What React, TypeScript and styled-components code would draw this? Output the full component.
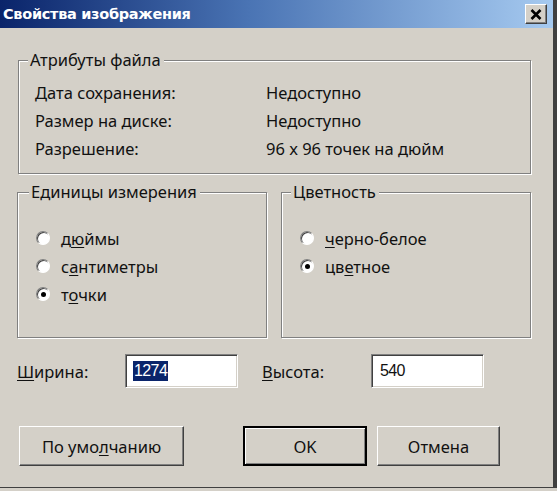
import React from 'react';
import styled, { createGlobalStyle } from 'styled-components';

const GlobalStyle = createGlobalStyle`
  html, body {
    margin: 0;
    padding: 0;
    background: #d4d0c8;
  }
  * {
    box-sizing: border-box;
  }
`;

const uiFont = `"Noto Sans", "Open Sans", "DejaVu Sans", sans-serif`;

const Window = styled.div`
  width: 557px;
  height: 488px;
  background: #d4d0c8;
  font-family: ${uiFont};
  font-size: 16.5px;
  color: #111;
  display: flex;
  flex-direction: column;
  border-right: 4px solid #404040;
  border-bottom: 1px solid #404040;
  overflow: hidden;
`;

const TitleBar = styled.div`
  height: 28px;
  flex: none;
  display: flex;
  align-items: center;
  justify-content: space-between;
  padding: 0 6px 0 3px;
  background: linear-gradient(to right, #0a246a 0%, #4a74b4 45%, #a6caf0 100%);
`;

const Title = styled.span`
  color: #fff;
  font-family: "DejaVu Sans", sans-serif;
  font-weight: bold;
  font-size: 14.5px;
  letter-spacing: -0.3px;
`;

const CloseButton = styled.button`
  width: 22px;
  height: 20px;
  padding: 0;
  display: flex;
  align-items: center;
  justify-content: center;
  background: #d4d0c8;
  border: 1px solid;
  border-color: #fff #404040 #404040 #fff;
  box-shadow: inset -1px -1px 0 #808080;
`;

const Content = styled.div`
  flex: 1;
  display: flex;
  flex-direction: column;
  padding: 0 22px 0 17px;
`;

const Group = styled.fieldset<{ $grow?: boolean }>`
  margin: 0;
  min-width: 0;
  border: 1px solid #808080;
  box-shadow: inset 1px 1px 0 #fff, 1px 1px 0 #fff;
  padding: 8px 0 11px 16px;
  ${({ $grow }) => ($grow ? 'flex: 1;' : '')}
`;

const Legend = styled.legend<{ $shift?: number }>`
  padding: 0 3px 0 2px;
  margin-left: ${({ $shift }) => $shift ?? -7}px;
  line-height: 20px;
  background: #d4d0c8;
`;

const FileGroup = styled(Group)`
  margin-top: 22px;
  margin-left: 1px;
`;

const AttrGrid = styled.div`
  display: grid;
  grid-template-columns: 231px auto;
  grid-auto-rows: 28px;
  align-items: center;
`;

const GroupRow = styled.div`
  display: flex;
  gap: 14px;
  margin-top: 8px;
`;

const RadioGroup = styled(Group)`
  padding: 22px 0 28px 18px;
  height: 156px;
`;

const RadioList = styled.div`
  display: flex;
  flex-direction: column;
`;

const RadioLabel = styled.label`
  display: flex;
  align-items: center;
  height: 28px;
  gap: 11px;
`;

const RadioCircle = styled.span<{ $checked?: boolean }>`
  width: 14px;
  height: 14px;
  border-radius: 50%;
  background: #fff;
  border: 1px solid;
  border-color: #808080 #fff #fff #808080;
  box-shadow: inset 1px 1px 0 #404040;
  display: flex;
  align-items: center;
  justify-content: center;
  flex: none;
  &::after {
    content: '';
    width: 5px;
    height: 5px;
    border-radius: 50%;
    background: ${({ $checked }) => ($checked ? '#000' : 'transparent')};
  }
`;

const Key = styled.span`
  text-decoration: underline;
  text-underline-offset: 2px;
`;

const SizeRow = styled.div`
  display: flex;
  align-items: center;
  margin-top: 16px;
  height: 34px;
`;

const FieldLabel = styled.span<{ $width: number }>`
  width: ${({ $width }) => $width}px;
  flex: none;
`;

const TextBox = styled.div<{ $gap?: number }>`
  width: 113px;
  height: 34px;
  background: #fff;
  border: 1px solid;
  border-color: #808080 #fff #fff #808080;
  box-shadow: inset 1px 1px 0 #404040, inset -1px -1px 0 #d4d0c8;
  display: flex;
  align-items: center;
  padding-left: 8px;
  margin-right: ${({ $gap }) => $gap ?? 0}px;
  font-family: "Liberation Sans", sans-serif;
  font-size: 16px;
  letter-spacing: -0.6px;
`;

const Selected = styled.span`
  background: #0a246a;
  color: #fff;
  line-height: 20px;
  padding: 0 1px;
  margin-left: -1px;
`;

const ButtonRow = styled.div`
  display: flex;
  margin-top: 38px;
  padding-left: 2px;
`;

const Button = styled.button<{ $width: number; $default?: boolean; $gap?: number }>`
  width: ${({ $width }) => $width}px;
  height: 40px;
  margin-right: ${({ $gap }) => $gap ?? 0}px;
  font-family: ${uiFont};
  font-size: 16.5px;
  color: #111;
  background: #d4d0c8;
  padding: 0;
  border: 1px solid;
  border-color: #fff #404040 #404040 #fff;
  box-shadow: inset -1px -1px 0 #808080;
  ${({ $default }) =>
    $default
      ? `
    border: 2px solid #000;
    box-shadow: inset 1px 1px 0 #fff, inset -1px -1px 0 #808080;
  `
      : ''}
`;

export default function App() {
  return (
    <>
      <GlobalStyle />
      <Window>
        <TitleBar>
          <Title>Свойства изображения</Title>
          <CloseButton aria-label="Закрыть">
            <svg width="12" height="11" viewBox="0 0 12 11">
              <path d="M1.5 1 L10.5 10 M10.5 1 L1.5 10" stroke="#000" strokeWidth="2.6" />
            </svg>
          </CloseButton>
        </TitleBar>
        <Content>
          <FileGroup>
            <Legend>Атрибуты файла</Legend>
            <AttrGrid>
              <span>Дата сохранения:</span>
              <span>Недоступно</span>
              <span>Размер на диске:</span>
              <span>Недоступно</span>
              <span>Разрешение:</span>
              <span>96 x 96 точек на дюйм</span>
            </AttrGrid>
          </FileGroup>
          <GroupRow>
            <RadioGroup $grow>
              <Legend>Единицы измерения</Legend>
              <RadioList>
                <RadioLabel>
                  <RadioCircle />
                  <span>
                    д<Key>ю</Key>ймы
                  </span>
                </RadioLabel>
                <RadioLabel>
                  <RadioCircle />
                  <span>
                    с<Key>а</Key>нтиметры
                  </span>
                </RadioLabel>
                <RadioLabel>
                  <RadioCircle $checked />
                  <span>
                    т<Key>о</Key>чки
                  </span>
                </RadioLabel>
              </RadioList>
            </RadioGroup>
            <RadioGroup $grow>
              <Legend $shift={-9}>Цветность</Legend>
              <RadioList>
                <RadioLabel>
                  <RadioCircle />
                  <span>
                    <Key>ч</Key>ерно-белое
                  </span>
                </RadioLabel>
                <RadioLabel>
                  <RadioCircle $checked />
                  <span>
                    цв<Key>е</Key>тное
                  </span>
                </RadioLabel>
              </RadioList>
            </RadioGroup>
          </GroupRow>
          <SizeRow>
            <FieldLabel $width={108}>
              <Key>Ш</Key>ирина:
            </FieldLabel>
            <TextBox $gap={24}>
              <Selected>1274</Selected>
            </TextBox>
            <FieldLabel $width={109}>
              <Key>В</Key>ысота:
            </FieldLabel>
            <TextBox>540</TextBox>
          </SizeRow>
          <ButtonRow>
            <Button $width={165} $gap={59}>
              По умо<Key>л</Key>чанию
            </Button>
            <Button $width={124} $gap={10} $default>
              OK
            </Button>
            <Button $width={123}>Отмена</Button>
          </ButtonRow>
        </Content>
      </Window>
    </>
  );
}
